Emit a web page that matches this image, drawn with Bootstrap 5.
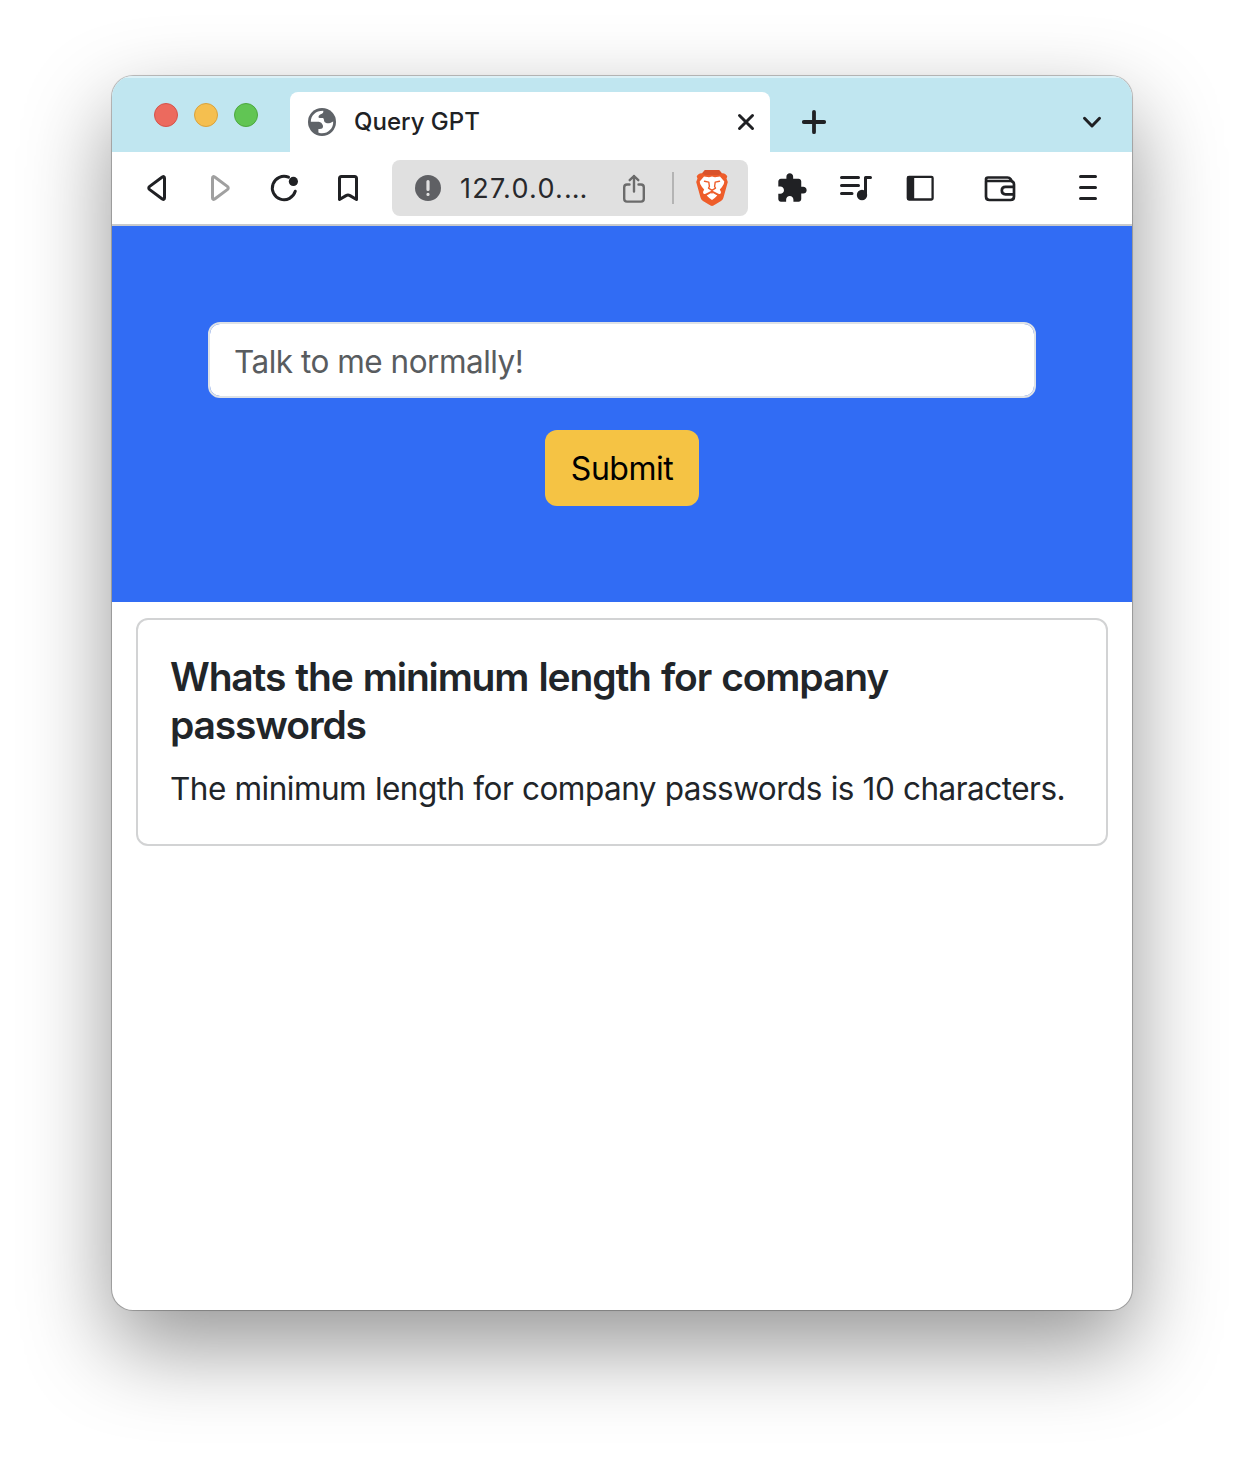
<!DOCTYPE html>
<html lang="en">
<head>
<meta charset="utf-8">
<title>Query GPT</title>
<link href="https://cdn.jsdelivr.net/npm/bootstrap@5.3.0/dist/css/bootstrap.min.css" rel="stylesheet">
<style>
  body { font-family: Inter, "Liberation Sans", sans-serif; background: #fff; color: #212529; height: 1458px; overflow: hidden; padding: 76px 112px 0; }
  .app-window { width: 1020px; height: 1234px; border-radius: 21px; background: #fff; overflow: hidden;
    box-shadow: 0 0 0 1px rgba(0,0,0,.2), 0 0 2px rgba(0,0,0,.15), 0 36px 88px rgba(0,0,0,.42); }
  .tab-strip { height: 76px; background: #c0e6f0; padding-left: 42px; box-shadow: inset 0 2px 0 rgba(255,255,255,.45); }
  .lights { width: 136px; gap: 16px; padding-top: 27px; }
  .light { width: 24px; height: 24px; border-radius: 50%; border: 1px solid; }
  .light-r { background: #ec6a5e; border-color: #d5534a; }
  .light-y { background: #f5bf4f; border-color: #d9a23c; }
  .light-g { background: #61c554; border-color: #4da73f; }
  .page-tab { width: 480px; height: 60px; border-radius: 8px 8px 0 0; background: #fff; padding: 0 8px 0 16px; }
  .tab-title { font-size: 24px; font-weight: 500; color: #202124; margin-left: 16px; }
  .tab-tools { height: 60px; padding: 0 24px 0 28px; }
  svg { display: block; flex: none; fill: none; stroke: #202124; stroke-width: 3; stroke-linecap: round; stroke-linejoin: round; overflow: visible; }
  .tool-row { height: 74px; padding: 0 12px 0; border-bottom: 2px solid #c8cacc; }
  .tool { width: 64px; height: 64px; display: flex; align-items: center; justify-content: center; flex: none; }
  .url-box { width: 356px; height: 56px; border-radius: 8px; background: #e0e0e0; margin: 0 12px; padding: 0 20px; }
  .url-text { width: 158px; margin-left: 16px; padding-top: 2px; font-size: 27px; letter-spacing: 1.25px; color: #28292c; white-space: nowrap; }
  .url-line { width: 2px; height: 32px; background: #b4b4b4; margin: 0 22px; }
  .hero { height: 376px; background: #316cf4; padding: 96px 96px 0; }
  .hero .form-control { height: 76px; border: 2px solid #dee2e6; border-radius: 12px; font-size: 31.5px; letter-spacing: -.5px; padding: 2px 24px 0; }
  .hero .form-control::placeholder { color: #595c5f; opacity: 1; }
  .hero .btn { width: 154px; height: 76px; margin-top: 32px; border-radius: 12px; background: #f5c344; border: 0; color: #000; font-size: 32px; letter-spacing: -.5px; padding: 2px 0 0; }
  .answer { margin: 16px 24px; height: 228px; border: 2px solid #d2d3d4; border-radius: 12px; }
  .answer .card-body { padding: 33px 32px; }
  .answer h5 { font-size: 39px; line-height: 48px; font-weight: 600; letter-spacing: -1.150px; word-spacing: 1.500px; margin-bottom: 16px; }
  .answer p { font-size: 31.5px; line-height: 48px; letter-spacing: -.52px; word-spacing: .4px; white-space: nowrap; }
</style>
<script src="https://cdn.jsdelivr.net/npm/bootstrap@5.3.0/dist/js/bootstrap.bundle.min.js"></script>
</head>
<body>
<div class="app-window d-flex flex-column">
  <div class="tab-strip d-flex">
    <div class="lights d-flex">
      <span class="light light-r"></span><span class="light light-y"></span><span class="light light-g"></span>
    </div>
    <div class="page-tab d-flex align-items-center mt-auto">
      <svg width="32" height="32" viewBox="-16 -16 32 32"><circle r="14" fill="#5f6368" stroke="none"/><path d="M-11.200-.3C-11-6.500-6.500-11.200 1.200-11.200C1.800-9.500 .8-8.700-.7-8C-2.300-7.200-3.500-6.600-3.500-5C-3.500-3.700-2-4 0-4C2.200-4 1.800-2.500 2.200-.8C2.800 .8 5 1.400 7 1.200C9 1 9.500-.3 11.200-.6C11.500 6 6.500 11.200 0 11.200C-1.500 11.200-3 10.900-3.600 10.400V7C-1.500 6.700 0 7.200 .8 5.500C1.500 3.500 .5 3 0 1.800C-.8 .2-2.500-.3-4.500-.3Z" fill="#fff" stroke="none"/></svg>
      <span class="tab-title">Query GPT</span>
      <svg class="ms-auto" width="32" height="32" viewBox="-16 -16 32 32"><path d="M-6.500-6.500L6.500 6.500M6.500-6.500L-6.500 6.500"/></svg>
    </div>
    <div class="tab-tools d-flex flex-grow-1 align-items-center justify-content-between mt-auto">
      <svg width="32" height="32" viewBox="-16 -16 32 32"><path d="M-10.200 0H10.200M0-10.200V10.200" stroke-width="3.800"/></svg>
      <svg width="32" height="32" viewBox="-16 -16 32 32"><path d="M-7.500-3.700L0 4L7.500-3.700"/></svg>
    </div>
  </div>
  <div class="tool-row d-flex align-items-center">
    <div class="tool"><svg width="32" height="32" viewBox="-16 -16 32 32"><path d="M6.300-11L-6.300-1.600Q-8.200 0-6.300 1.600L6.300 11Q8.500 12.200 8.500 9.800V-9.800Q8.500-12.200 6.300-11Z"/></svg></div>
    <div class="tool"><svg width="32" height="32" viewBox="-16 -16 32 32"><path stroke="#a0a0a0" d="M-5.300-11L7.300-1.600Q9.200 0 7.300 1.600L-5.300 11Q-7.500 12.200-7.500 9.800V-9.800Q-7.500-12.200-5.300-11Z"/></svg></div>
    <div class="tool"><svg width="32" height="32" viewBox="-16 -16 32 32"><path d="M11.300 3.200A11.700 11.700 0 1 1 4.500-10.800"/><circle cx="9.400" cy="-6.600" r="4.600" fill="#202124" stroke="none"/></svg></div>
    <div class="tool"><svg width="32" height="32" viewBox="-16 -16 32 32"><path d="M-8.500 11.500V-9.500Q-8.500-11.500-6.500-11.500H6.500Q8.500-11.500 8.500-9.500V11.500L2 7.600Q0 6.600-2 7.600Z"/></svg></div>
    <div class="url-box d-flex align-items-center">
      <svg width="32" height="32" viewBox="-16 -16 32 32"><circle r="13" fill="#5f6064" stroke="none"/><path stroke="#e0e0e0" stroke-width="3.200" d="M0-6.500V1.500M0 6.300V6.400"/></svg>
      <span class="url-text">127.0.0.…</span>
      <svg width="32" height="32" viewBox="-16 -16 32 32"><path stroke="#6b6b6b" stroke-width="2.400" d="M-4.500-3.500H-7Q-9.800-3.500-9.800-.7V10.800Q-9.800 13.600-7 13.600H7Q9.800 13.600 9.800 10.800V-.7Q9.800-3.500 7-3.500H4.500M0 3.500V-12M-4.300-7.800L0-12L4.300-7.800"/></svg>
      <span class="url-line"></span>
      <svg width="32" height="36" viewBox="-16 -18 32 36"><path fill="#ee5d2a" stroke="none" d="M-7-18H7L9.800-14.700C12-15.300 14.500-13.500 15.300-11.500L14.500-9.500L15.800-6L11.500 9.500Q11 11.500 9 13L1.500 17.600Q0 18.400-1.500 17.600L-9 13Q-11 11.500-11.500 9.500L-15.800-6L-14.500-9.500L-15.300-11.500C-14.500-13.500-12-15.300-9.800-14.700Z"/><path fill="#d9522a" stroke="none" d="M-7-18H7L9.800-14.700L7-13H-7L-9.800-14.700Z"/><path fill="#fff" stroke="none" d="M-8-11.500L-3-10.800L0-11.500L3-10.800L8-11.500L12.300-6.500Q12.500-4.500 10-1L7.800 1.500L9 4Q9 7 6 5.500L0 2.500L-6 5.500Q-9 7-9 4L-7.800 1.500L-10-1Q-12.500-4.500-12.300-6.500ZM0 4.500L5.300 7.500Q2.500 10.500 0 12Q-2.500 10.500-5.300 7.500Z"/><path stroke="#ee5d2a" stroke-width="1.400" d="M-7.500-6.700L-3.200-5.900L-2.600-1.500L-3.500 .2L0 2.300L3.500 .2L2.600-1.500L3.200-5.900L7.500-6.700M0 2.300V5"/></svg>
    </div>
    <div class="tool"><svg width="32" height="32" viewBox="-16 -16 32 32"><path fill="#202124" stroke="none" transform="translate(-16.400 -16.050) scale(1.350)" d="M20.500 11H19V7c0-1.100-.9-2-2-2h-4V3.500C13 2.120 11.880 1 10.500 1S8 2.120 8 3.500V5H4c-1.100 0-1.990.9-1.990 2v3.800H3.500c1.490 0 2.700 1.210 2.700 2.700s-1.210 2.700-2.700 2.700H2V20c0 1.100.9 2 2 2h3.800v-1.500c0-1.490 1.210-2.700 2.700-2.700 1.490 0 2.700 1.210 2.700 2.700V22H17c1.100 0 2-.9 2-2v-4h1.500c1.380 0 2.500-1.120 2.500-2.500S21.880 11 20.500 11z"/></svg></div>
    <div class="tool"><svg width="32" height="32" viewBox="-16 -16 32 32"><path d="M-14.500-10.600H2.500M-14.500-2.600H2.500M-14.500 5.400H-4M14.500-10.600H9.500V7"/><circle cx="6" cy="7" r="5.200" fill="#202124" stroke="none"/></svg></div>
    <div class="tool"><svg width="32" height="32" viewBox="-16 -16 32 32"><rect x="-12.200" y="-11.200" width="24.800" height="22.700" rx="1.200" stroke-width="2.300"/><path d="M-12.500-11.500H-5.800V11.500H-12.500Z" fill="#202124" stroke="none"/></svg></div>
    <div class="tool ms-3"><svg width="32" height="32" viewBox="-16 -16 32 32"><path stroke-width="2.700" d="M-14-7.500V8.500Q-14 12-10.500 12H10.500Q14 12 14 8.500V-3.500Q14-7 10.500-7H-12.500Q-14-7-14-8.700Q-14-10.500-12-10.500H7.500Q9.500-10.500 10.500-9L12-6.500M14-1.200H5.500Q1.800-1.200 1.800 2.600Q1.800 6.300 5.500 6.300H14"/></svg></div>
    <div class="tool ms-auto"><svg width="32" height="32" viewBox="-16 -16 32 32"><path d="M-7.500-11.600H7.500M-7.500-.6H7.500M-7.500 10.400H7.500"/></svg></div>
  </div>
  <form class="hero text-center">
    <input class="form-control" type="text" placeholder="Talk to me normally!">
    <button class="btn" type="button">Submit</button>
  </form>
  <div class="card answer">
    <div class="card-body">
      <h5 class="card-title">Whats the minimum length for company passwords</h5>
      <p class="card-text">The minimum length for company passwords is 10 characters.</p>
    </div>
  </div>
</div>
</body>
</html>
